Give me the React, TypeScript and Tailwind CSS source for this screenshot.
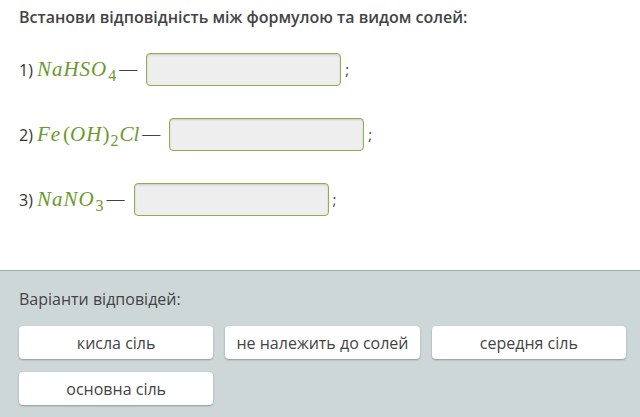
import React from "react";

const sans = { fontFamily: '"Open Sans", "Noto Sans", sans-serif' };
const serif = { fontFamily: '"Liberation Serif", "DejaVu Serif", serif' };

function I({ children }: { children: React.ReactNode }) {
  return <span className="italic tracking-[1px]">{children}</span>;
}
function Sub({ children }: { children: React.ReactNode }) {
  return <span className="relative top-[5px] text-[16px] not-italic ml-[1px]">{children}</span>;
}

function Box() {
  return (
    <div className="w-[195px] h-[33px] rounded-[4px] border border-[#8fae4d] bg-[#eeeeee] shadow-[inset_0_1px_2px_rgba(0,0,0,0.15)]" />
  );
}

function Row({ n, formula }: { n: string; formula: React.ReactNode }) {
  return (
    <div className="flex items-center h-[33px]">
      <span className="text-[16px] text-[#333]">{n})</span>
      <span className="ml-[4px] text-[21px] text-[#6a9a2c] leading-none flex items-baseline" style={serif}>
        {formula}
      </span>
      <span className="ml-[3px] mr-[9px] text-[18px] text-[#444]" style={serif}>—</span>
      <Box />
      <span className="ml-[4px] text-[15px] text-[#444]">;</span>
    </div>
  );
}

function Btn({ label }: { label: string }) {
  return (
    <div className="h-[33px] rounded-[4px] bg-white shadow-[0_1px_2px_rgba(0,0,0,0.3)] flex items-center justify-center text-[16px] text-[#444]">
      {label}
    </div>
  );
}

export default function App() {
  return (
    <div className="w-[640px] h-[417px] bg-white overflow-hidden flex flex-col" style={sans}>
      <div className="h-[270px] px-[19px] pt-[6px] flex flex-col">
        <div className="text-[16px] font-semibold text-[#444] leading-[22px]">
          Встанови відповідність між формулою та видом солей:
        </div>
        <div className="mt-[25px] flex flex-col gap-[32px]">
          <Row
            n="1"
            formula={
              <>
                <I>NaHSO</I>
                <Sub>4</Sub>
              </>
            }
          />
          <Row
            n="2"
            formula={
              <>
                <I>Fe</I>
                <span className="ml-[2px]">(</span>
                <I>OH</I>
                <span>)</span>
                <Sub>2</Sub>
                <span className="ml-[1px] italic">Cl</span>
              </>
            }
          />
          <Row
            n="3"
            formula={
              <>
                <I>NaNO</I>
                <Sub>3</Sub>
              </>
            }
          />
        </div>
      </div>
      <div className="flex-1 border-t border-[#9ea8a9] bg-[#ced7d8] px-[19px] pt-[17px]">
        <div className="text-[16px] text-[#444] leading-[22px]">Варіанти відповідей:</div>
        <div className="mt-[16px] grid grid-cols-3 gap-x-[12px] gap-y-[13px] w-[607px]">
          <Btn label="кисла сіль" />
          <Btn label="не належить до солей" />
          <Btn label="середня сіль" />
          <Btn label="основна сіль" />
        </div>
      </div>
    </div>
  );
}
